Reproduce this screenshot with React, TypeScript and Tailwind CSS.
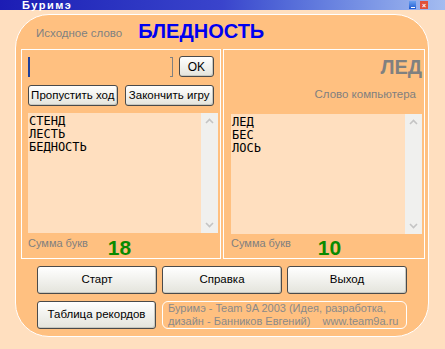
import React from 'react';

const btn =
  'flex items-center justify-center rounded-[3px] border border-[#4a4a4a] bg-gradient-to-b from-white to-[#e4e4dc] text-[11.5px] text-black shadow-[inset_-1px_-1px_0_#c8c8c0]';

function ScrollList({ words }: { words: string[] }) {
  return (
    <div className="flex h-[120px] bg-[#FFDFBF]">
      <div className="flex-1 pl-[1px] pt-[2px] font-['DejaVu_Sans_Mono',monospace] text-[12px] leading-[13px] text-black">
        {words.map(w => (
          <div key={w}>{w}</div>
        ))}
      </div>
      <div className="flex w-[17px] flex-col items-center justify-between bg-[#F0F0EE] py-[5px]">
        <svg width="9" height="6" viewBox="0 0 9 6">
          <path d="M1 5 L4.5 1.5 L8 5" fill="none" stroke="#c4c4c4" strokeWidth="1.6" />
        </svg>
        <svg width="9" height="6" viewBox="0 0 9 6">
          <path d="M1 1 L4.5 4.5 L8 1" fill="none" stroke="#c4c4c4" strokeWidth="1.6" />
        </svg>
      </div>
    </div>
  );
}

function SumRow({ value, gap }: { value: string; gap: string }) {
  return (
    <div className="flex h-[25px] items-end">
      <span className="mb-[7px] text-[11px] text-[#7f7f7f]">Сумма букв</span>
      <span className={`${gap} text-[21px] font-bold leading-[21px] text-[#0a8a00]`}>{value}</span>
    </div>
  );
}

export default function App() {
  return (
    <div className="relative h-[349px] w-[445px] overflow-hidden bg-[#FFDFBF] font-['Liberation_Sans',Arial,sans-serif]">
      {/* title bar */}
      <div className="flex h-[10px] items-center bg-gradient-to-r from-[#1c1cb4] via-[#3a44cc] to-[#a4bcf0]">
        <span className="pl-[22px] text-[11px] font-bold leading-[10px] tracking-[1.5px] text-white">Буримэ</span>
        <div className="ml-auto mr-[17px] flex gap-[4px]">
          <div className="flex h-[8px] w-[7px] items-end justify-center bg-gradient-to-b from-[#6aa0f0] to-[#1c58d0] pb-[1px]">
            <div className="h-[1px] w-[4px] bg-white" />
          </div>
          <div className="flex h-[8px] w-[8px] items-center justify-center bg-[#e0503a] text-[7px] font-bold leading-none text-white">
            ×
          </div>
        </div>
      </div>

      {/* main panel */}
      <div className="ml-[15px] mt-[4px] flex h-[323px] w-[414px] flex-col rounded-[34px] border border-white bg-[#FFC080]">
        <div className="flex h-[34px] items-center pl-[20px]">
          <span className="mt-[4px] text-[11.5px] text-[#808080]">Исходное слово</span>
          <span className="ml-[16px] mt-[-2px] text-[20px] font-bold leading-none text-[#0000f0]">БЛЕДНОСТЬ</span>
        </div>

        <div className="ml-[5px] flex gap-[2px]">
          {/* left box */}
          <div className="flex h-[210px] w-[200px] flex-col border border-white px-[6px] pt-[6px]">
            <div className="flex h-[22px] gap-[6px]">
              <div className="relative h-[22px] w-[148px]">
                <div className="absolute left-0 top-[1px] h-[20px] w-[2px] bg-[#20409a]" />
                <div className="absolute right-0 top-[1px] h-[20px] w-[3px] border-y border-r border-[#808080]" />
              </div>
              <div className={`${btn} h-[21px] w-[36px] text-[12px]`}>OK</div>
            </div>
            <div className="mt-[7px] flex h-[21px] gap-[7px]">
              <div className={`${btn} w-[92px]`}>Пропустить ход</div>
              <div className={`${btn} w-[92px]`}>Закончить игру</div>
            </div>
            <div className="mt-[7px] w-[190px]">
              <ScrollList words={['СТЕНД', 'ЛЕСТЬ', 'БЕДНОСТЬ']} />
            </div>
            <SumRow value="18" gap="ml-[20px]" />
          </div>

          {/* right box */}
          <div className="flex h-[210px] w-[202px] flex-col border border-white pl-[7px] pr-[2px]">
            <div className="flex h-[28px] items-end justify-end">
              <span className="text-[20px] font-bold leading-none text-[#808080]">ЛЕД</span>
            </div>
            <div className="mt-[9px] flex justify-end pr-[6px]">
              <span className="text-[11.5px] text-[#7f7f7f]">Слово компьютера</span>
            </div>
            <div className="mt-[10px] w-[191px]">
              <ScrollList words={['ЛЕД', 'БЕС', 'ЛОСЬ']} />
            </div>
            <div className="flex-1" />
            <SumRow value="10" gap="ml-[27px]" />
          </div>
        </div>

        {/* bottom buttons */}
        <div className="mt-[7px] flex gap-[5px] pl-[21px]">
          <div className={`${btn} h-[28px] w-[120px]`}>Старт</div>
          <div className={`${btn} h-[28px] w-[120px]`}>Справка</div>
          <div className={`${btn} h-[28px] w-[120px]`}>Выход</div>
        </div>
        <div className="mt-[7px] flex gap-[6px] pl-[21px]">
          <div className={`${btn} h-[28px] w-[119px]`}>Таблица рекордов</div>
          <div className="flex h-[28px] w-[245px] flex-col justify-center rounded-[6px] border border-white pl-[5px] text-[11px] leading-[13px] text-[#8a8a8a]">
            <div>Буримэ - Team 9A 2003 (Идея, разработка,</div>
            <div className="whitespace-pre">дизайн - Банников Евгений)    www.team9a.ru</div>
          </div>
        </div>
      </div>
    </div>
  );
}
